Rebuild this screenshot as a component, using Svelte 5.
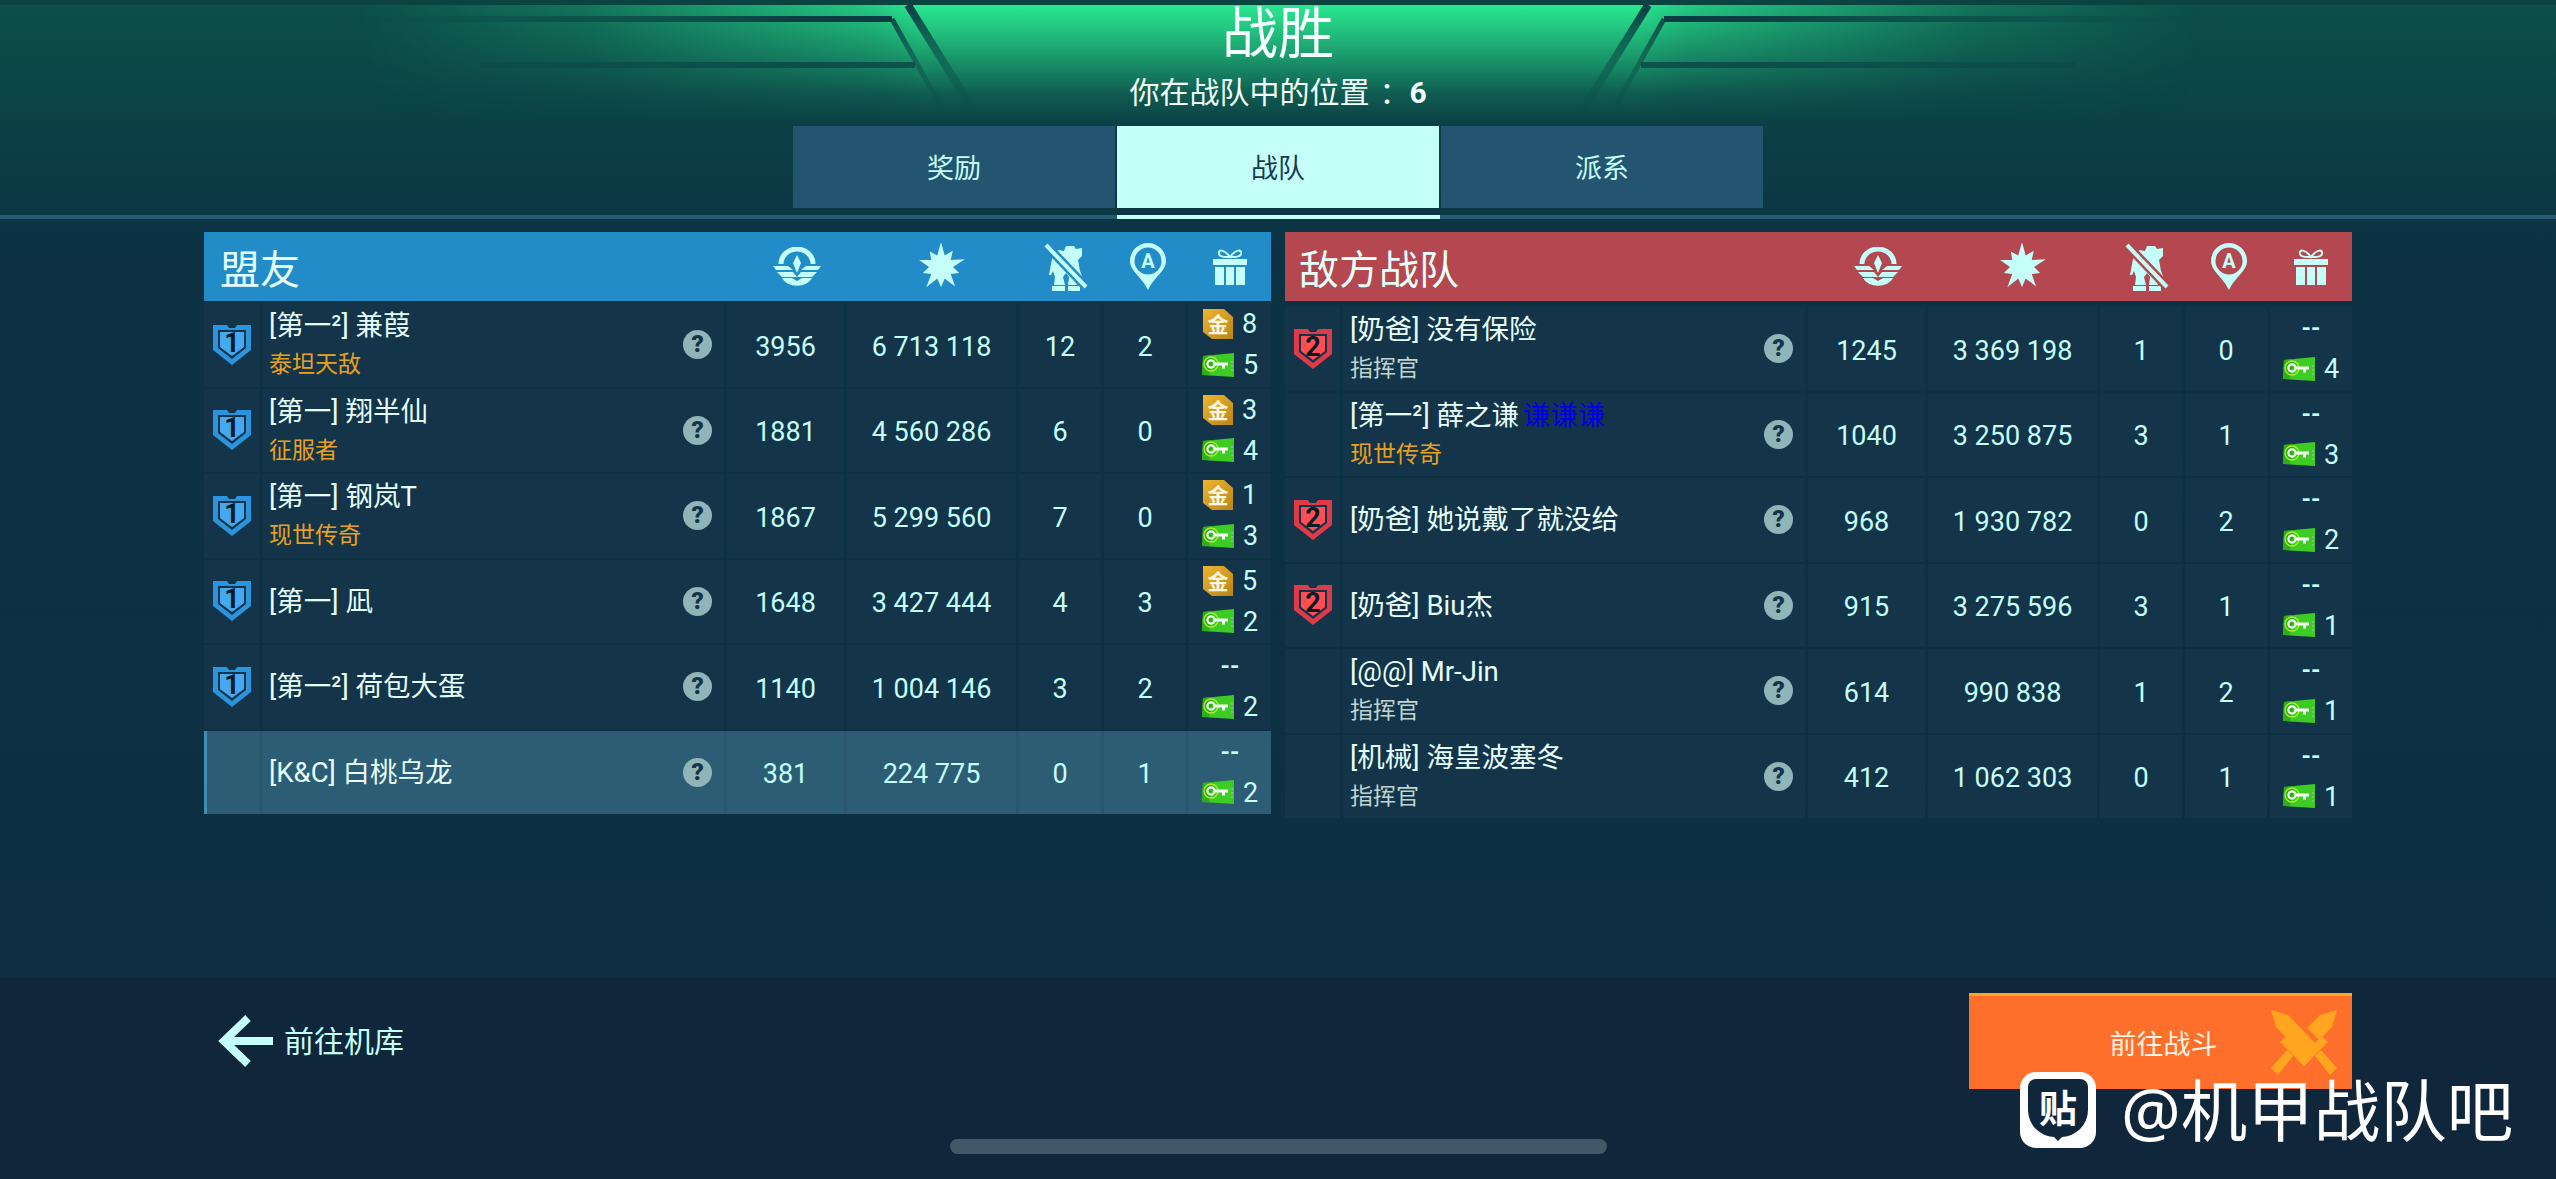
<script>
	const allies = [
		{ rank: 1, name: "[第一²] 兼葭", title: "泰坦天敌", tier: "gold", score: "3956", dmg: "6 713 118", kills: "12", caps: "2", gold: "8", keys: "5" },
		{ rank: 1, name: "[第一] 翔半仙", title: "征服者", tier: "gold", score: "1881", dmg: "4 560 286", kills: "6", caps: "0", gold: "3", keys: "4" },
		{ rank: 1, name: "[第一] 钢岚T", title: "现世传奇", tier: "gold", score: "1867", dmg: "5 299 560", kills: "7", caps: "0", gold: "1", keys: "3" },
		{ rank: 1, name: "[第一] 凪", score: "1648", dmg: "3 427 444", kills: "4", caps: "3", gold: "5", keys: "2" },
		{ rank: 1, name: "[第一²] 荷包大蛋", score: "1140", dmg: "1 004 146", kills: "3", caps: "2", keys: "2" },
		{ name: "[K&C] 白桃乌龙", score: "381", dmg: "224 775", kills: "0", caps: "1", keys: "2", me: true }
	];

	const enemies = [
		{ rank: 2, name: "[奶爸] 没有保险", title: "指挥官", score: "1245", dmg: "3 369 198", kills: "1", caps: "0", keys: "4" },
		{ name: "[第一²] 薛之谦", tag: "谦谦谦", title: "现世传奇", tier: "gold", score: "1040", dmg: "3 250 875", kills: "3", caps: "1", keys: "3" },
		{ rank: 2, name: "[奶爸] 她说戴了就没给", score: "968", dmg: "1 930 782", kills: "0", caps: "2", keys: "2" },
		{ rank: 2, name: "[奶爸] Biu杰", score: "915", dmg: "3 275 596", kills: "3", caps: "1", keys: "1" },
		{ name: "[@@] Mr-Jin", title: "指挥官", score: "614", dmg: "990 838", kills: "1", caps: "2", keys: "1" },
		{ name: "[机械] 海皇波塞冬", title: "指挥官", score: "412", dmg: "1 062 303", kills: "0", caps: "1", keys: "1" }
	];

	const teams = [
		{ label: "盟友", cls: "ally", rows: allies },
		{ label: "敌方战队", cls: "enemy", rows: enemies }
	];

	// uneven burst for the damage column
	const radii = [25, 12, 20, 12, 25, 12, 19, 12, 24, 12, 20, 12, 25, 12, 19, 12, 23, 12, 19, 12];
	const burst = radii
		.map((r, i) => {
			const a = (i / radii.length) * Math.PI * 2 - Math.PI / 2;
			return `${(24 + r * Math.cos(a)).toFixed(1)},${(24 + r * Math.sin(a)).toFixed(1)}`;
		})
		.join(" ");
</script>

{#snippet shield(rank)}
	<svg class={rank === 1 ? "badge blue" : "badge red"} viewBox="0 0 40 42" width="40" height="42">
		<path class="outer" d="M1 1 H15 L17 4 H23 L25 1 H39 V26 L20 41 L1 26 Z" />
		<path class="rim" d="M6 6 H34 V24 L20 35 L6 24 Z" />
		<path class="inner" d="M8 8 H32 V23 L20 32 L8 23 Z" />
		<text x="20" y="28" text-anchor="middle">{rank}</text>
	</svg>
{/snippet}

{#snippet goldIcon()}
	<svg viewBox="0 0 30 30" width="30" height="30">
		<defs>
			<linearGradient id="gold" x1="0" y1="0" x2="1" y2="1">
				<stop offset="0" stop-color="#eeb52f" />
				<stop offset="1" stop-color="#b9851a" />
			</linearGradient>
		</defs>
		<path d="M0 0 H21 L30 8 V30 H9 L0 23 Z" fill="url(#gold)" />
		<text x="15" y="23" text-anchor="middle" class="coin">金</text>
	</svg>
{/snippet}

{#snippet keyIcon()}
	<svg viewBox="0 0 32 25" width="32" height="25">
		<path d="M1 3 L32 0 V24 L0 22 Z" fill="#3ccc24" />
		<path d="M1 3 L12 2 L7 22 L0 22 Z" fill="#2fae1c" />
		<circle cx="9" cy="11" r="7" fill="none" stroke="#b4ec34" stroke-width="1.3" />
		<circle cx="9" cy="11" r="3.6" fill="none" stroke="#f4fff0" stroke-width="2.2" />
		<path d="M12 9.4 H26 V12.6 H23 V15.5 H20 V12.6 H12 Z" fill="#f4fff0" />
		<path d="M29 8 h2 v2 h-2z M29 12 h2 v2 h-2z M29 16 h2 v2 h-2z" fill="#8fb0a0" />
	</svg>
{/snippet}

{#snippet headIcons()}
	<span class="slot s1">
		<svg viewBox="0 0 48 40" width="48" height="40">
			<path d="M8 17 A16 15 0 0 1 40 17" fill="none" stroke="currentColor" stroke-width="5" />
			<path d="M24 8 L28 16 L24 26 L20 16 Z" fill="currentColor" />
			<path d="M0 19 H15 L20 23 H3 Z M4 25 H20 L24 30 H9 Z M48 19 H33 L28 23 H45 Z M44 25 H28 L24 30 H39 Z" fill="currentColor" />
			<path d="M9 31 H19 L24 34 L29 31 H39 A16 12 0 0 1 9 31 Z" fill="currentColor" />
		</svg>
	</span>
	<span class="slot s2">
		<svg viewBox="0 0 48 48" width="48" height="48"><polygon points={burst} fill="currentColor" /></svg>
	</span>
	<span class="slot s3">
		<svg viewBox="0 0 44 48" width="44" height="48">
			<path d="M14 7 L20 8 L22 3 H30 L32 6 L38 5 L38 13 L34 17 L36 28 L38 33 H33 L31 28 L30 34 L33 42 H24 L25 34 L22 30 L19 34 L21 42 H10 L11 34 L9 28 L7 32 H5 L8 16 Z" fill="currentColor" />
			<rect x="8" y="43" width="13" height="5" fill="currentColor" />
			<rect x="24" y="43" width="12" height="5" fill="currentColor" />
			<path d="M2 2 L42 44" class="gap" />
			<path d="M2 2 L42 44" fill="none" stroke="currentColor" stroke-width="4" />
		</svg>
	</span>
	<span class="slot s4">
		<svg viewBox="0 0 36 48" width="36" height="48">
			<path d="M18 0 C8 0 0 8 0 18 C0 28 12 34 18 47 C24 34 36 28 36 18 C36 8 28 0 18 0 Z" fill="currentColor" />
			<circle cx="18" cy="18" r="13.5" class="hole" />
			<text x="18" y="25" text-anchor="middle" class="pin">A</text>
		</svg>
	</span>
	<span class="slot s5">
		<svg viewBox="0 0 34 36" width="34" height="36">
			<path d="M17 8 C11 0 5 0 6 5 C7 9 13 8 17 8 C21 8 27 9 28 5 C29 0 23 0 17 8 Z" fill="none" stroke="currentColor" stroke-width="2" />
			<rect x="0" y="10" width="34" height="6" fill="currentColor" />
			<path d="M2 18 H11 V36 H2 Z M13 18 H21 V36 H13 Z M23 18 H32 V36 H23 Z" fill="currentColor" />
		</svg>
	</span>
{/snippet}

<div class="screen">
	<svg class="decor" viewBox="0 0 2556 125" width="2556" height="125">
		<defs>
			<linearGradient id="glowX" x1="0" x2="1" y1="0" y2="0">
				<stop offset="0.14" stop-color="#2ae890" stop-opacity="0" />
				<stop offset="0.23" stop-color="#2ae890" stop-opacity="0.25" />
				<stop offset="0.34" stop-color="#2ae890" stop-opacity="0.8" />
				<stop offset="0.36" stop-color="#2ae890" stop-opacity="1" />
				<stop offset="0.64" stop-color="#2ae890" stop-opacity="1" />
				<stop offset="0.66" stop-color="#2ae890" stop-opacity="0.8" />
				<stop offset="0.77" stop-color="#2ae890" stop-opacity="0.25" />
				<stop offset="0.86" stop-color="#2ae890" stop-opacity="0" />
			</linearGradient>
			<linearGradient id="fadeY" x1="0" x2="0" y1="0" y2="1">
				<stop offset="0" stop-color="#fff" />
				<stop offset="0.4" stop-color="#8c8c8c" />
				<stop offset="0.75" stop-color="#262626" />
				<stop offset="1" stop-color="#000" />
			</linearGradient>
			<linearGradient id="stripeL" gradientUnits="userSpaceOnUse" x1="330" x2="800" y1="0" y2="0">
				<stop offset="0" stop-color="#0a3c42" stop-opacity="0" />
				<stop offset="1" stop-color="#0a3c42" />
			</linearGradient>
			<linearGradient id="stripeR" gradientUnits="userSpaceOnUse" x1="2226" x2="1756" y1="0" y2="0">
				<stop offset="0" stop-color="#0a3c42" stop-opacity="0" />
				<stop offset="1" stop-color="#0a3c42" />
			</linearGradient>
			<mask id="fade">
				<rect x="0" y="5" width="2556" height="118" fill="url(#fadeY)" />
			</mask>
		</defs>
		<rect x="0" y="5" width="2556" height="118" fill="url(#glowX)" mask="url(#fade)" />
		<rect x="0" y="0" width="2556" height="5" fill="#0a433f" />
		<g fill="none" stroke="#0a3c42" stroke-width="5" mask="url(#fade)">
			<path d="M908 5 L972 108" stroke-width="8" />
			<path d="M892 19 L940 105" />
			<path d="M1648 5 L1584 108" stroke-width="8" />
			<path d="M1664 19 L1616 105" />
		</g>
		<rect x="330" y="16" width="562" height="6" fill="url(#stripeL)" />
		<rect x="1664" y="16" width="562" height="6" fill="url(#stripeR)" />
		<rect x="480" y="62" width="435" height="6" fill="url(#stripeL)" opacity="0.7" />
		<rect x="1641" y="62" width="435" height="6" fill="url(#stripeR)" opacity="0.7" />
	</svg>

	<header class="top">
		<h1>战胜</h1>
		<p class="place">你在战队中的位置<span class="colon">：</span><b>6</b></p>
		<nav class="tabs">
			<span class="tab">奖励</span>
			<span class="tab active">战队</span>
			<span class="tab">派系</span>
		</nav>
	</header>

	<div class="rule"><i></i><i class="on"></i><i></i></div>

	<main class="tables">
		{#each teams as team}
			<section class={["team", team.cls]}>
				<div class="head">
					<h2>{team.label}</h2>
					{@render headIcons()}
				</div>
				<div class="rows">
					{#each team.rows as p}
						<div class={["row", p.me && "me"]}>
							<div class="cell rank">
								{#if p.rank}{@render shield(p.rank)}{/if}
							</div>
							<div class="cell who">
								<div class="names">
									<span class="name">{p.name}{#if p.tag}<span class="tag">{p.tag}</span>{/if}</span>
									{#if p.title}<span class={["title", p.tier]}>{p.title}</span>{/if}
								</div>
								<span class="help">?</span>
							</div>
							<div class="cell num">{p.score}</div>
							<div class="cell num">{p.dmg}</div>
							<div class="cell num">{p.kills}</div>
							<div class="cell num">{p.caps}</div>
							<div class="cell loot">
								{#if p.gold}
									<span class="line">{@render goldIcon()}<span>{p.gold}</span></span>
								{:else}
									<span class="line none">--</span>
								{/if}
								<span class="line">{@render keyIcon()}<span>{p.keys}</span></span>
							</div>
						</div>
					{/each}
				</div>
			</section>
		{/each}
	</main>

	<footer class="bottom">
		<div class="back">
			<svg viewBox="0 0 56 52" width="56" height="52">
				<path d="M30 3 L6 26 L30 49 M8 26 H55" fill="none" stroke="#c4fffa" stroke-width="8" />
			</svg>
			<span>前往机库</span>
		</div>
		<div class="fight">
			<span>前往战斗</span>
			<svg class="swords" viewBox="0 0 66 66" width="66" height="66">
				<path d="M0 0 L17 5 L47 36 L36 47 L5 17 Z" fill="#ffa51f" />
				<path d="M51 26 L57 32 L33 56 L27 50 Z" fill="#ffa51f" />
				<path d="M44 46 L50 40 L66 58 L59 65 Z" fill="#ffa51f" />
				<g transform="translate(66 0) scale(-1 1)">
					<path d="M0 0 L17 5 L30 18 L18 30 L5 17 Z" fill="#ffa51f" />
					<path d="M30 30 L42 42 L36 47 L25 36 Z" fill="#ffa51f" />
					<path d="M51 26 L57 32 L33 56 L27 50 Z" fill="#ffa51f" />
					<path d="M44 46 L50 40 L66 58 L59 65 Z" fill="#ffa51f" />
				</g>
			</svg>
		</div>
	</footer>

	<div class="home"></div>

	<div class="mark">
		<span class="logo"><span class="bubble">贴</span></span>
		<span>@机甲战队吧</span>
	</div>
</div>

<style>
	:global(body) {
		margin: 0;
		background: #0f2639;
	}

	.screen {
		position: relative;
		width: 2556px;
		height: 1179px;
		overflow: hidden;
		display: flex;
		flex-direction: column;
		background: linear-gradient(180deg, #0b5049 0, #0b4045 130px, #0c3344 240px, #0d2e41 978px);
		color: #c4fffa;
		font-family: Roboto, "Noto Sans CJK SC", sans-serif;
	}

	.decor {
		position: absolute;
		top: 0;
		left: 0;
	}

	.top {
		position: relative;
		height: 208px;
		display: flex;
		flex-direction: column;
		align-items: center;
	}

	h1 {
		margin: 6px 0 0;
		font-size: 56px;
		line-height: 56px;
		font-weight: 400;
		color: #f2fffb;
	}

	.place {
		margin: 11px 0 13px;
		font-size: 30px;
		line-height: 40px;
		color: #f2fffb;
	}

	.colon {
		margin-left: 10px;
	}

	.place b {
		font-weight: 700;
	}

	.tabs {
		display: flex;
		gap: 2px;
	}

	.tab {
		width: 322px;
		height: 82px;
		display: flex;
		align-items: center;
		justify-content: center;
		padding-bottom: 2px;
		box-sizing: border-box;
		background: #245570;
		font-size: 27px;
	}

	.tab.active {
		background: #c4fffa;
		color: #173c50;
	}

	.rule {
		display: flex;
		height: 4px;
		margin-top: 7px;
		background: #2a5a72;
		justify-content: center;
	}

	.rule i {
		flex: 1;
	}

	.rule i.on {
		flex: none;
		width: 323px;
		background: #c4fffa;
	}

	.tables {
		flex: 1;
		display: flex;
		gap: 14px;
		padding: 13px 0 0 204px;
	}

	.team {
		width: 1067px;
	}

	.head {
		height: 69px;
		display: flex;
		align-items: center;
		--head: #228cc8;
		background: var(--head);
	}

	.enemy .head {
		--head: #b4474f;
	}

	h2 {
		flex: 1;
		margin: 0;
		padding-left: 16px;
		font-size: 40px;
		font-weight: 400;
		color: #e6fffb;
	}

	.enemy h2 {
		padding-left: 14px;
	}

	.slot {
		display: flex;
		justify-content: center;
		color: #c4fffa;
	}

	.slot svg {
		display: block;
	}

	.s1 {
		width: 122px;
	}
	.s2 {
		width: 166px;
	}
	.s3 {
		width: 83px;
	}
	.s4,
	.s5 {
		width: 82px;
	}

	.gap {
		fill: none;
		stroke: var(--head);
		stroke-width: 9;
	}

	.hole {
		fill: var(--head);
	}

	.pin {
		font: 700 20px Roboto, sans-serif;
		fill: currentColor;
	}

	.rows {
		margin-top: 2px;
		display: grid;
		grid-auto-rows: 83.5px;
		row-gap: 2px;
	}

	.enemy .rows {
		margin-top: 6px;
	}

	.row {
		display: grid;
		grid-template-columns: 55px 462px 117px 169px 82px 82px 82px;
		column-gap: 3px;
	}

	.cell {
		background: #133449;
		display: flex;
		align-items: center;
		justify-content: center;
	}

	.me {
		background: #2a566e;
	}

	.me .cell {
		background: #2d5c75;
	}

	.me .rank {
		border-left: 3px solid #3f8db2;
	}

	.num {
		font-size: 27px;
		padding-top: 4px;
	}

	.who {
		justify-content: space-between;
		padding: 0 12px 0 7px;
	}

	.names {
		display: flex;
		flex-direction: column;
		gap: 8px;
	}

	.name {
		font-size: 27.5px;
		line-height: 33px;
		color: #e6fffb;
	}

	.tag {
		color: #0000e6;
		margin-left: 4px;
	}

	.title {
		font-size: 23px;
		line-height: 30px;
		color: #bfd4d2;
	}

	.title.gold,
	.ally .title {
		color: #e8a020;
	}

	.help {
		width: 29px;
		height: 29px;
		border-radius: 50%;
		background: #8fb5b8;
		color: #133449;
		font-size: 24px;
		font-weight: 900;
		line-height: 29px;
		text-align: center;
		flex: none;
	}

	.loot {
		flex-direction: column;
		font-size: 27px;
	}

	.line {
		height: 41px;
		display: flex;
		align-items: center;
		gap: 9px;
	}

	.line svg {
		display: block;
	}

	.none {
		font-size: 24px;
		font-weight: 700;
	}

	.badge .outer {
		fill: #2b94dc;
	}
	.badge .rim {
		fill: #123449;
	}
	.badge .inner {
		fill: #45a9f2;
	}
	.badge.red .outer {
		fill: #e03a48;
	}
	.badge.red .inner {
		fill: #ff4f55;
	}
	.badge text {
		font: 700 27px Roboto, sans-serif;
		fill: #0a1a24;
	}

	.coin {
		font: 700 21px "Noto Sans CJK SC", sans-serif;
		fill: #fff6df;
	}

	.bottom {
		height: 201px;
		background: #10263a;
		display: flex;
		justify-content: space-between;
		align-items: flex-start;
		padding-right: 204px;
	}

	.back {
		display: flex;
		align-items: center;
		gap: 10px;
		margin: 37px 0 0 218px;
		font-size: 30px;
	}

	.back span {
		margin-top: -4px;
	}

	.fight {
		position: relative;
		width: 383px;
		height: 93px;
		margin-top: 15px;
		border-top: 3px solid #ffa51f;
		background: #ff6f2c;
		color: #fff3e2;
		font-size: 27px;
		display: flex;
		align-items: center;
		justify-content: center;
	}

	.fight span {
		margin-right: -6px;
	}

	.swords {
		position: absolute;
		left: 302px;
		top: 14px;
	}

	.home {
		position: absolute;
		left: 950px;
		top: 1139px;
		width: 657px;
		height: 15px;
		border-radius: 8px;
		background: #425869;
	}

	.mark {
		position: absolute;
		left: 2020px;
		top: 1072px;
		display: flex;
		align-items: center;
		gap: 25px;
		color: #fff;
		font-size: 66.5px;
		line-height: 76px;
		font-family: "Noto Sans", "Noto Sans CJK SC", sans-serif;
	}

	.logo {
		width: 76px;
		height: 76px;
		border-radius: 16px;
		background: #fff;
		display: flex;
		align-items: flex-start;
		justify-content: center;
	}

	.bubble {
		position: relative;
		width: 60px;
		height: 58px;
		margin-top: 7px;
		border-radius: 8px 8px 27px 27px;
		background: #10263a;
		color: #fff;
		font-size: 38px;
		line-height: 54px;
		text-align: center;
		font-weight: 700;
		font-family: "Noto Sans CJK SC", sans-serif;
	}

	.bubble::after {
		content: "";
		position: absolute;
		left: 25px;
		bottom: -4px;
		border: 5px solid transparent;
		border-top-color: #10263a;
		border-bottom: 0;
	}
</style>
